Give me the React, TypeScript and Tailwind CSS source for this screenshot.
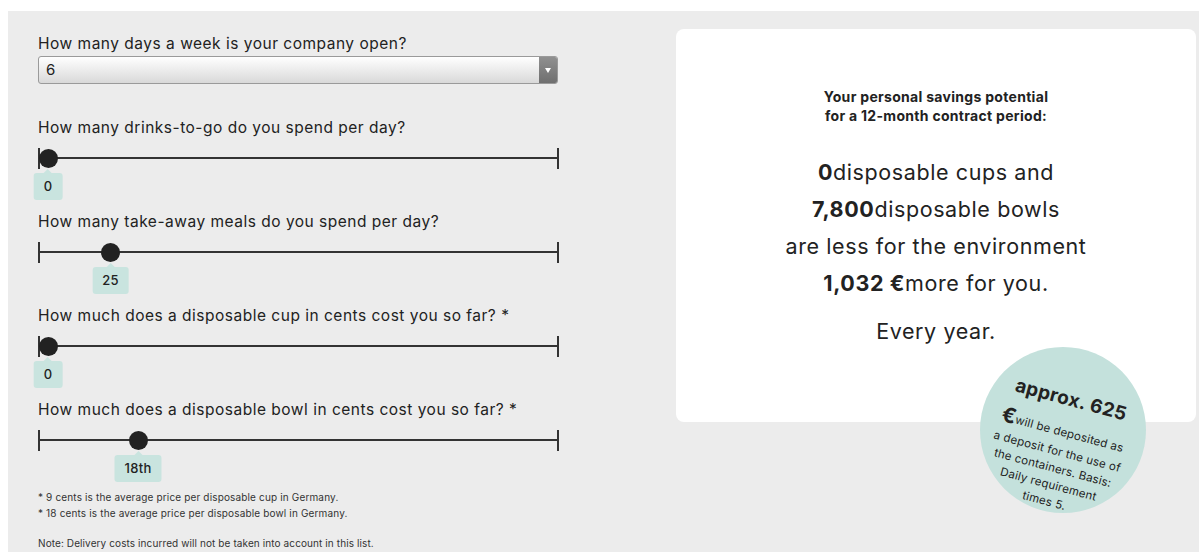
import React from "react";

const FONT = { fontFamily: "Inter, 'Noto Sans', sans-serif" };

type SliderProps = {
  question: string;
  value: number;
  max: number;
  label: string;
};

// Horizontal range slider with end ticks and a value bubble below the thumb
function RangeRow({ question, value, max, label }: SliderProps) {
  const pos = 10 + (value / max) * 500;
  return (
    <div className="flex flex-col">
      <div className="h-[20px] whitespace-nowrap text-[15.5px] leading-[20px] tracking-[0.5px] text-[#222]">
        {question}
      </div>
      <div className="relative mt-[10px] h-[21px] w-[521px]">
        <div className="absolute left-0 top-[9px] h-[2px] w-full bg-[#333]" />
        <div className="absolute left-0 top-0 h-[21px] w-[2px] bg-[#333]" />
        <div className="absolute right-0 top-0 h-[21px] w-[2px] bg-[#333]" />
        <div
          className="absolute top-[1px] h-[19px] w-[19px] rounded-full bg-[#222]"
          style={{ left: pos - 9.5 }}
        />
      </div>
      <div className="relative mt-[4px] h-[27px] w-[521px]">
        <div
          className="absolute top-0 flex h-[27px] -translate-x-1/2 items-center justify-center rounded-[3px] bg-[#c9e4df] px-[10px] text-[13px] font-medium tracking-[0.3px] text-[#222]"
          style={{ left: pos }}
        >
          <span className="absolute -top-[4px] left-1/2 h-0 w-0 -translate-x-1/2 border-x-[4px] border-b-[4px] border-x-transparent border-b-[#c9e4df]" />
          {label}
        </div>
      </div>
    </div>
  );
}

export default function App() {
  return (
    <div className="min-h-[552px] bg-white pl-[8px] pt-[11px]" style={FONT}>
      <div className="flex min-h-[541px] items-start bg-[#ececec] pl-[30px]">
        {/* Calculator inputs */}
        <div className="flex w-[521px] flex-col pt-[23px]">
          <div className="h-[20px] whitespace-nowrap text-[15.5px] leading-[20px] tracking-[0.5px] text-[#222]">
            How many days a week is your company open?
          </div>
          <div className="mt-[2px] flex h-[28px] w-[520px] overflow-hidden rounded-[3px] border border-[#9a9a9a] bg-gradient-to-b from-white to-[#d9d9d9]">
            <div className="flex flex-1 items-center pl-[7px] text-[15px] text-[#222]">6</div>
            <div className="flex w-[18px] items-center justify-center bg-gradient-to-b from-[#909090] to-[#6f6f6f]">
              <span className="h-0 w-0 border-x-[3px] border-t-[5px] border-x-transparent border-t-white" />
            </div>
          </div>

          <div className="mt-[34px] flex flex-col gap-[12px]">
            <RangeRow question="How many drinks-to-go do you spend per day?" value={0} max={100} label="0" />
            <RangeRow question="How many take-away meals do you spend per day?" value={25} max={200} label="25" />
            <RangeRow question="How much does a disposable cup in cents cost you so far? *" value={0} max={100} label="0" />
            <RangeRow question="How much does a disposable bowl in cents cost you so far? *" value={18} max={100} label="18th" />
          </div>

          <div className="mt-[7px] whitespace-nowrap text-[10px] leading-[16px] tracking-[0.15px] text-[#333]">
            <div>* 9 cents is the average price per disposable cup in Germany.</div>
            <div>* 18 cents is the average price per disposable bowl in Germany.</div>
          </div>
          <div className="mt-[14px] whitespace-nowrap text-[10px] leading-[16px] tracking-[0.1px] text-[#333]">
            Note: Delivery costs incurred will not be taken into account in this list.
          </div>
        </div>

        {/* Savings result card */}
        <div className="relative ml-[117px] mt-[18px] h-[393px] w-[520px] rounded-[8px] bg-white">
          <div className="flex flex-col items-center pt-[58px] text-center text-[#222]">
            <div className="text-[14px] font-bold leading-[19px] tracking-[0.3px]">
              Your personal savings potential
              <br />
              for a 12-month contract period:
            </div>
            <div className="mt-[29px] text-[21.5px] leading-[37px] tracking-[0.6px]">
              <div>
                <b className="font-bold">0</b>disposable cups and
              </div>
              <div>
                <b className="font-bold">7,800</b>disposable bowls
              </div>
              <div>are less for the environment</div>
              <div>
                <b className="font-bold">1,032 €</b>more for you.
              </div>
            </div>
            <div className="mt-[11px] text-[21.5px] leading-[37px] tracking-[0.6px]">Every year.</div>
          </div>

          {/* Deposit badge */}
          <div className="absolute left-[304px] top-[318px] h-[166px] w-[166px] rounded-full bg-[#c4e1dc]">
            <div className="flex h-[166px] w-[166px] rotate-[15deg] flex-col items-center pt-[41px] text-center text-[#222]">
              <div className="whitespace-nowrap text-[19px] font-bold leading-[22px] tracking-[0.3px]">approx. 625</div>
              <div className="mt-[10px] flex h-[20px] items-end whitespace-nowrap">
                <span className="text-[21px] font-bold leading-[20px]">€</span>
                <span className="text-[11.5px] leading-[16px] tracking-[0.2px]">will be deposited as</span>
              </div>
              <div className="mt-[4px] whitespace-nowrap text-[11.5px] leading-[17px] tracking-[0.2px]">a deposit for the use of</div>
              <div className="whitespace-nowrap text-[11.5px] leading-[17px] tracking-[0.2px]">the containers. Basis:</div>
              <div className="whitespace-nowrap text-[11.5px] leading-[17px] tracking-[0.2px]">Daily requirement</div>
              <div className="whitespace-nowrap text-[11.5px] leading-[17px] tracking-[0.2px]">times 5.</div>
            </div>
          </div>
        </div>
      </div>
    </div>
  );
}
